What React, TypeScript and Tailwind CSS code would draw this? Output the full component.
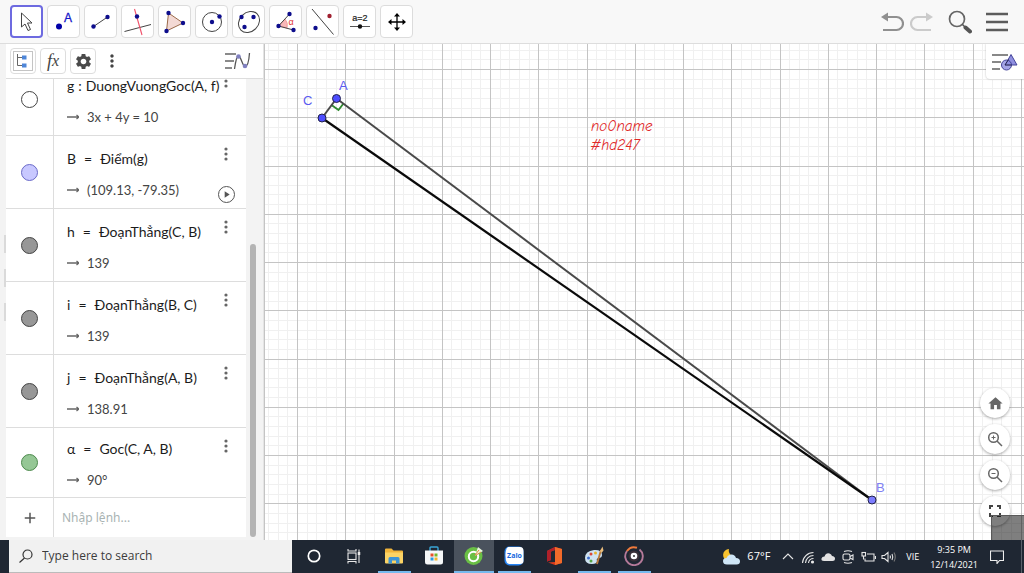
import type { ReactNode } from 'react';
import { MdHome, MdSettings, MdAdd, MdMoreVert, MdPlayArrow } from 'react-icons/md';

const NAVY = '#0d0d8c';

type Row = {
  name: string;
  sep: string;
  def: string;
  value: string;
  marble: string;
  play?: boolean;
  short?: boolean;
};

const ROWS: Row[] = [
  { name: 'g', sep: ':', def: 'DuongVuongGoc(A, f)', value: '3x + 4y = 10', marble: 'bg-white border-[#444444]' },
  { name: 'B', sep: '=', def: 'Điểm(g)', value: '(109.13, -79.35)', marble: 'bg-[#c8c8ff] border-[#6a6ac8]', play: true },
  { name: 'h', sep: '=', def: 'ĐoạnThẳng(C, B)', value: '139', marble: 'bg-[#979797] border-[#444444]' },
  { name: 'i', sep: '=', def: 'ĐoạnThẳng(B, C)', value: '139', marble: 'bg-[#979797] border-[#444444]' },
  { name: 'j', sep: '=', def: 'ĐoạnThẳng(A, B)', value: '138.91', marble: 'bg-[#979797] border-[#444444]' },
  { name: 'α', sep: '=', def: 'Goc(C, A, B)', value: '90°', marble: 'bg-[#95c795] border-[#4d8a4d]', short: true },
];

function Dot({ x, y, fill = NAVY, r = 2.2 }: { x: number; y: number; fill?: string; r?: number }) {
  return <circle cx={x} cy={y} r={r} fill={fill} />;
}

// every tool icon is drawn in a 32x32 box
const TOOLS: { label: string; icon: ReactNode }[] = [
  {
    label: 'Move',
    icon: <path d="M10.500 7V21L14 18L17 24.500L19.500 23.500L16.500 17H21Z" fill="#fff" stroke="#444" strokeWidth="1" />,
  },
  {
    label: 'Point',
    icon: (
      <>
        <Dot x={11} y={20.5} r={3} fill="#0000a8" />
        <text x="16" y="16" fontSize="12" fill="#1414c8" stroke="#1414c8" strokeWidth="0.3" fontFamily="Liberation Sans, sans-serif">A</text>
      </>
    ),
  },
  {
    label: 'Line',
    icon: (
      <>
        <path d="M8.500 20.500L22.500 11" stroke="#444" />
        <Dot x={8.5} y={20.5} />
        <Dot x={22.5} y={11} />
      </>
    ),
  },
  {
    label: 'Perpendicular line',
    icon: (
      <>
        <path d="M2.500 25.500L29 18.500" stroke="#444" />
        <path d="M12.500 3L20 29" stroke="#f0506a" strokeWidth="1.100" />
        <Dot x={15} y={10.5} />
      </>
    ),
  },
  {
    label: 'Polygon',
    icon: (
      <>
        <path d="M9.500 7L24 17L7.500 25Z" fill="#f3d9d4" stroke="#9a6a4a" />
        <Dot x={9.5} y={7} />
        <Dot x={24} y={17} />
        <Dot x={7.5} y={25} />
      </>
    ),
  },
  {
    label: 'Circle',
    icon: (
      <>
        <circle cx="16" cy="16" r="9.500" fill="none" stroke="#444" />
        <Dot x={16} y={16} />
        <Dot x={23.5} y={10.5} />
      </>
    ),
  },
  {
    label: 'Conic',
    icon: (
      <>
        <ellipse cx="16" cy="16" rx="11.500" ry="9.500" transform="rotate(-45 16 16)" fill="none" stroke="#444" />
        <Dot x={8.5} y={11} />
        <Dot x={20.500} y={11} />
        <Dot x={11.500} y={21} />
      </>
    ),
  },
  {
    label: 'Angle',
    icon: (
      <>
        <path d="M8.500 20L15 13A9.500 9.500 0 0 1 17 22Z" fill="#f8b8b8" stroke="#ee8888" strokeWidth="0.700" />
        <path d="M19.500 8L8.500 20L23.500 24" fill="none" stroke="#444" />
        <Dot x={19.500} y={8} />
        <Dot x={8.500} y={20} />
        <Dot x={23.500} y={24} />
        <text x="18.500" y="19" fontSize="9" fill="#e03030" fontFamily="Liberation Sans, sans-serif">α</text>
      </>
    ),
  },
  {
    label: 'Reflect',
    icon: (
      <>
        <path d="M5 3L26.500 28.500" stroke="#444" />
        <Dot x={8.500} y={22} />
        <Dot x={22.500} y={10} fill="#a02030" />
      </>
    ),
  },
  {
    label: 'Slider',
    icon: (
      <>
        <text x="16" y="15" textAnchor="middle" fontSize="9" fill="#222" stroke="#222" strokeWidth="0.200" fontFamily="Liberation Sans, sans-serif">a=2</text>
        <path d="M6 20.500H26" stroke="#555" />
        <Dot x={16} y={20.500} fill="#111" />
      </>
    ),
  },
  {
    label: 'Move view',
    icon: (
      <>
        <path d="M16 9V23M9 16H23" stroke="#000" strokeWidth="1.300" />
        <path d="M16 7L19 10.500H13ZM16 25L19 21.500H13ZM7 16L10.500 13V19ZM25 16L21.500 13V19Z" fill="#000" />
      </>
    ),
  },
];

function Toolbar() {
  return (
    <header className="flex h-[44px] shrink-0 items-center justify-between border-b border-[#dddddd] bg-[#f8f8f8] pr-4 pl-[10px]">
      <div className="flex gap-1">
        {TOOLS.map((t, i) => (
          <button
            key={t.label}
            aria-label={t.label}
            className={`flex h-[33px] w-[33px] items-center justify-center rounded-sm bg-white ${
              i === 0 ? 'border-2 border-[#6d6ae0]' : 'border border-[#dcdcdc]'
            }`}
          >
            <svg viewBox="0 0 32 32" className="h-8 w-8 shrink-0">{t.icon}</svg>
          </button>
        ))}
      </div>
      <div className="flex items-center">
        <button aria-label="Undo" className="mr-[6px]">
          <svg viewBox="0 0 24 24" className="h-6 w-6" fill="none">
            <path d="M6 7H16.500A6.500 6.500 0 0 1 16.500 20H3" stroke="#909090" strokeWidth="2.200" />
            <path d="M1 7L8 2.500V11.500Z" fill="#909090" />
          </svg>
        </button>
        <button aria-label="Redo" className="mr-[14px]">
          <svg viewBox="0 0 24 24" className="h-6 w-6" fill="none">
            <path d="M18 7H7.500A6.500 6.500 0 0 0 7.500 20H21" stroke="#cbcbcb" strokeWidth="2.200" />
            <path d="M23 7L16 2.500V11.500Z" fill="#cbcbcb" />
          </svg>
        </button>
        <button aria-label="Search" className="mr-[14px]">
          <svg viewBox="0 0 24 24" className="h-6 w-6" fill="none">
            <circle cx="9" cy="9" r="7.500" stroke="#666" strokeWidth="1.700" />
            <path d="M14.500 14.500L17 17" stroke="#555" strokeWidth="1.500" />
            <path d="M17.500 17.500L22 21.500" stroke="#555" strokeWidth="4" strokeLinecap="round" />
          </svg>
        </button>
        <button aria-label="Menu">
          <svg viewBox="0 0 22 22" className="h-[22px] w-[22px]">
            <path d="M0 3H22M0 11H22M0 19H22" stroke="#5c5c5c" strokeWidth="2.500" />
          </svg>
        </button>
      </div>
    </header>
  );
}

function AlgebraRow({ row }: { row: Row }) {
  return (
    <li className={`flex shrink-0 border-b border-[#dddddd] ${row.short ? 'h-[70px]' : 'h-[73px]'}`}>
      <div className="flex w-12 shrink-0 items-center justify-center border-r border-[#dddddd]">
        <button aria-label={`Show ${row.name}`} className={`h-[17px] w-[17px] rounded-full border ${row.marble}`} />
      </div>
      <div className={`flex min-w-0 flex-1 flex-col gap-[11px] pl-[13px] whitespace-nowrap ${row.short ? 'pt-[11px]' : 'pt-[13px]'}`}>
        <div className={`flex text-[14px] leading-5 text-[#1c1c1c] ${row.sep === ':' ? 'gap-1' : 'gap-2'}`}>
          <span>{row.name}</span>
          <span>{row.sep}</span>
          <span>{row.def}</span>
        </div>
        <div className="flex items-center gap-2 text-[13px] leading-5 text-[#444444]">
          <svg viewBox="0 0 12 8" className="h-2 w-3" fill="none">
            <path d="M0 4H12M9.500 2L12 4L9.500 6" stroke="#666" strokeWidth="1.300" />
          </svg>
          <span>{row.value}</span>
        </div>
      </div>
      <div className="flex w-10 shrink-0 flex-col items-center justify-between pt-[10px] pb-[5px]">
        <button aria-label="More">
          <svg viewBox="0 0 4 16" className="h-4 w-1" fill="#666">
            <circle cx="2" cy="3" r="1.600" />
            <circle cx="2" cy="8" r="1.600" />
            <circle cx="2" cy="13" r="1.600" />
          </svg>
        </button>
        {row.play && (
          <button aria-label="Play" className="flex h-[17px] w-[17px] items-center justify-center rounded-full border border-[#555555] text-[#555555]">
            <MdPlayArrow size={11} />
          </button>
        )}
      </div>
    </li>
  );
}

function AlgebraView() {
  return (
    <aside className="flex w-[258px] shrink-0 flex-col border-r border-[#e4e4e4] bg-[#f3f3f3]">
      <div className="flex h-[35px] shrink-0 items-center gap-[4px] border-b border-[#dddddd] bg-white pr-3 pl-[4px]">
        <button aria-label="Algebra view" className="flex h-[26px] w-[26px] items-center justify-center rounded-sm border border-[#dddddd] bg-white">
          <svg viewBox="0 0 20 20" className="h-5 w-5" fill="none">
            <rect x="0.500" y="0.500" width="19" height="19" stroke="#c4c4c4" />
            <path d="M4.500 3V14.500M4.500 6.500H9M4.500 14.500H9" stroke="#666" />
            <rect x="9" y="4.500" width="4.500" height="4" fill="#4f86d8" />
            <rect x="9" y="12.500" width="4.500" height="4" fill="#4f86d8" />
          </svg>
        </button>
        <button aria-label="Function" className="flex h-[26px] w-[26px] items-center justify-center rounded-sm border border-[#dddddd] bg-white font-['Liberation_Serif',serif] text-[18px] leading-5 text-[#444444] italic">
          <span>f</span>
          <span className="text-[16px]">x</span>
        </button>
        <button aria-label="Settings" className="flex h-[26px] w-[26px] items-center justify-center rounded-sm border border-[#dddddd] bg-white text-[#4a4a4a]">
          <MdSettings size={19} />
        </button>
        <button aria-label="More options" className="flex w-6 justify-center text-[#444444]">
          <MdMoreVert size={20} />
        </button>
        <button aria-label="Style bar" className="ml-auto">
          <svg viewBox="0 0 26 18" className="h-[18px] w-[26px]" fill="none">
            <path d="M0 2H11M0 9H9M0 16H7" stroke="#8a8a8a" strokeWidth="2" />
            <path d="M9.500 17C10.500 10 12 4 13.500 4C16 4 17.500 14.500 20 14.500C22.500 14.500 24 8 24.500 1" stroke="#555" strokeWidth="1.300" />
            <circle cx="13.500" cy="4.500" r="2.300" fill="#8080c0" />
            <circle cx="20" cy="14" r="2.300" fill="#8080c0" />
          </svg>
        </button>
      </div>
      <div className="flex min-h-0 flex-1 pb-[3px]">
        <div className="flex min-w-0 flex-1 flex-col justify-end overflow-hidden bg-white font-[Lato,'Noto_Sans',sans-serif]">
          <ul className="flex flex-col">
            {ROWS.map((row) => (
              <AlgebraRow key={row.name} row={row} />
            ))}
          </ul>
          <div className="flex h-[39px] shrink-0">
            <button aria-label="Add" className="flex w-12 shrink-0 items-center justify-center border-r border-[#dddddd] text-[#555555]">
              <MdAdd size={18} />
            </button>
            <input
              aria-label="Nhập lệnh"
              placeholder="Nhập lệnh..."
              className="min-w-0 flex-1 pl-2 font-['Noto_Sans',sans-serif] text-[12px] outline-none placeholder:text-[#a9b3b3]"
            />
          </div>
        </div>
        <div className="flex w-[17px] shrink-0 flex-col justify-end pl-1">
          <div className="h-[64%] w-[6px] rounded-full bg-[#b4b4b4]" />
        </div>
      </div>
    </aside>
  );
}

const UNIT = 48.25;
const LINES = Array.from({ length: 220 }, (_, i) => i - 5);

function Graph() {
  return (
    <svg className="absolute inset-0 h-full w-full" fontFamily="Liberation Sans, sans-serif" fontSize="13">
      <g shapeRendering="crispEdges">
        {LINES.filter((i) => i % 5 !== 0).map((i) => (
          <path
            key={i}
            d={`M${Math.round(32 + (i * UNIT) / 5) + 0.5} 0V2000M0 ${Math.round(25 + (i * UNIT) / 5) + 0.5}H3000`}
            stroke="#f0f0f0"
          />
        ))}
        {LINES.filter((i) => i % 5 === 0).map((i) => (
          <path
            key={i}
            d={`M${Math.round(32 + (i * UNIT) / 5) + 0.5} 0V2000M0 ${Math.round(25 + (i * UNIT) / 5) + 0.5}H3000`}
            stroke="#c4c4c4"
          />
        ))}
      </g>
      <path d="M78.500 59.500L73.500 66L66.500 61" fill="none" stroke="#2f8a2f" strokeWidth="1.900" />
      <path d="M71.500 54.500L607 456" stroke="#4a4a4a" strokeWidth="2" />
      <path d="M71.500 54.500L57 74" stroke="#4a4a4a" strokeWidth="2" />
      <path d="M57 74L607 456" stroke="#0a0a0a" strokeWidth="2.200" />
      <g stroke="#22224a">
        <circle cx="71.500" cy="54.500" r="4" fill="#4d4dff" />
        <circle cx="57" cy="74" r="4" fill="#4d4dff" />
        <circle cx="607" cy="456" r="4" fill="#7d7dff" />
      </g>
      <text x="74" y="46" fill="#5a5af0">A</text>
      <text x="38" y="61" fill="#5a5af0">C</text>
      <text x="611" y="448" fill="#8080f4">B</text>
      <g fill="#e02828" fontFamily="Z003, 'Comic Neue', cursive" fontStyle="italic" fontSize="15">
        <text x="326" y="87">no0name</text>
        <text x="325" y="106">#hd247</text>
      </g>
    </svg>
  );
}

function ZoomButton({ label, children }: { label: string; children: ReactNode }) {
  return (
    <button
      aria-label={label}
      className="flex h-[30px] w-[30px] items-center justify-center rounded-full bg-white text-[#666666] shadow-[0_1px_3px_rgba(0,0,0,0.35)]"
    >
      {children}
    </button>
  );
}

function GraphicsView() {
  return (
    <main className="relative min-w-0 flex-1 overflow-hidden border-l border-[#c4c4c4] bg-white">
      <Graph />
      <button
        aria-label="Graphics style bar"
        className="absolute top-0 right-0 flex h-[35px] w-[38px] items-center justify-center rounded-bl-sm bg-white shadow-[0_0_2px_rgba(0,0,0,0.3)]"
      >
        <svg viewBox="0 0 26 18" className="h-[18px] w-[26px]" fill="none">
          <path d="M0 2H16M0 9H9M0 16H8" stroke="#888" strokeWidth="2" />
          <path d="M19 1.500L25 12H13Z" fill="#8f8fe0" stroke="#44449a" />
          <circle cx="14.500" cy="12" r="5" fill="#8f8fe0" fillOpacity="0.800" stroke="#44449a" />
          <path d="M16.500 6.500L13 12H19.500" stroke="#22224a" />
        </svg>
      </button>
      <div className="absolute right-[14px] bottom-[14px] flex flex-col gap-[6px]">
        <ZoomButton label="Home">
          <MdHome size={17} />
        </ZoomButton>
        <ZoomButton label="Zoom in">
          <svg viewBox="0 0 16 16" className="h-4 w-4" fill="none" stroke="currentColor" strokeWidth="1.500">
            <circle cx="6.500" cy="6.500" r="4.800" />
            <path d="M10 10L15 15" />
            <path d="M6.500 4.500V8.500M4.500 6.500H8.500" strokeWidth="1" />
          </svg>
        </ZoomButton>
        <ZoomButton label="Zoom out">
          <svg viewBox="0 0 16 16" className="h-4 w-4" fill="none" stroke="currentColor" strokeWidth="1.500">
            <circle cx="6.500" cy="6.500" r="4.800" />
            <path d="M10 10L15 15" />
            <path d="M4.500 6.500H8.500" strokeWidth="1" />
          </svg>
        </ZoomButton>
        <ZoomButton label="Fullscreen">
          <svg viewBox="0 0 12 12" className="h-3 w-3" fill="none" stroke="#444" strokeWidth="2">
            <path d="M1 4V1H4M8 1H11V4M11 8V11H8M4 11H1V8" />
          </svg>
        </ZoomButton>
      </div>
      <div className="absolute right-0 bottom-0 h-[25px] w-[33px] border-t border-l border-[#5a5a5a] bg-black/50" />
    </main>
  );
}

const APPS: { label: string; width: string; bar: string; icon: ReactNode }[] = [
  { label: 'Cortana', width: 'w-10', bar: '', icon: <circle cx="10" cy="10" r="5.700" fill="none" stroke="#fff" strokeWidth="1.700" /> },
  {
    label: 'Task view',
    width: 'w-10',
    bar: '',
    icon: (
      <g fill="none" stroke="#e8e8e8" strokeWidth="1.100">
        <rect x="4" y="7" width="8" height="6.500" />
        <path d="M4 3V5H12V3M4 17.500V15.500H12V17.500M15 3.500V17" />
        <path d="M15 6V9" strokeWidth="2.500" />
      </g>
    ),
  },
  {
    label: 'File Explorer',
    width: 'w-10',
    bar: 'w-[33px]',
    icon: (
      <>
        <path d="M1 3.500Q1 2.500 2 2.500H7.500L9.500 4.500H18Q19 4.500 19 5.500V16.500H1Z" fill="#f0b43a" />
        <path d="M1 6.500H19V16.500Q19 17.500 18 17.500H2Q1 17.500 1 16.500Z" fill="#fbd365" />
        <path d="M4.500 17.500V12.500Q4.500 11 6 11H14Q15.500 11 15.500 12.500V17.500H12V14.500H8V17.500Z" fill="#3d94d6" />
      </>
    ),
  },
  {
    label: 'Store',
    width: 'w-10',
    bar: '',
    icon: (
      <>
        <path d="M6 5V2Q6 1 7 1H13Q14 1 14 2V5" fill="none" stroke="#3aa7d8" strokeWidth="1.400" />
        <path d="M1 4.500H19V16Q19 18.500 16.500 18.500H3.500Q1 18.500 1 16Z" fill="#f5f7f8" />
        <path d="M6.500 7.500H9.500V10.500H6.500Z" fill="#e8502a" />
        <path d="M10.500 7.500H13.500V10.500H10.500Z" fill="#75b82a" />
        <path d="M6.500 11.500H9.500V14.500H6.500Z" fill="#2a9be0" />
        <path d="M10.500 11.500H13.500V14.500H10.500Z" fill="#f4b62c" />
      </>
    ),
  },
  {
    label: 'Browser',
    width: 'w-10 bg-[#4a525d]',
    bar: 'w-full',
    icon: (
      <>
        <circle cx="9.500" cy="10" r="9" fill="#6abf45" />
        <circle cx="9.500" cy="10.500" r="4.700" fill="none" stroke="#fff" strokeWidth="2" />
        <path d="M11 10L14 1L19 5Z" fill="#e9f7dc" />
        <path d="M11 9L15 4M11.500 9.500L17 6" stroke="#e07a30" strokeWidth="0.900" />
      </>
    ),
  },
  {
    label: 'Zalo',
    width: 'w-10',
    bar: 'w-[33px]',
    icon: (
      <>
        <rect x="0.500" y="0.500" width="19" height="19" rx="5" fill="#2684f5" />
        <path d="M4 1H16Q19.500 1 19.500 5V15Q19.500 18 16 18H5L3 17Q1.500 14 1.500 9Q1.500 3 4 1Z" fill="#fff" />
        <text x="10.500" y="12" textAnchor="middle" fontSize="7" fontWeight="700" fill="#1468e0" fontFamily="Open Sans, sans-serif">Zalo</text>
      </>
    ),
  },
  {
    label: 'Office',
    width: 'w-10',
    bar: '',
    icon: (
      <>
        <path d="M3 5L11 1L18 3V17L11 19L4 16.500L11 16V4L7 5.500V14L3 15.500Z" fill="#dc3a1c" />
        <path d="M11 1L18 3V17L11 19Z" fill="#f26a2a" />
        <path d="M3 5L11 1V4L7 5.500V14L3 15.500Z" fill="#b0202a" />
      </>
    ),
  },
  {
    label: 'Paint',
    width: 'w-10',
    bar: 'w-[33px]',
    icon: (
      <>
        <path d="M1 12Q1 5 10 4Q18 3.500 18 9Q18 12 14.500 12Q12 12.500 13 15Q13 18 8 18Q1 18 1 12Z" fill="#cfe3f2" />
        <Dot x={4.500} y={12} r={1.500} fill="#3f6fd0" />
        <Dot x={7} y={8} r={1.500} fill="#d8483a" />
        <Dot x={11.500} y={7} r={1.500} fill="#e8b52c" />
        <Dot x={7} y={15} r={1.500} fill="#56a544" />
        <path d="M17 4L13 18" stroke="#b8793a" strokeWidth="1.800" />
        <path d="M16 5L18.500 0.500L19.500 4.500L17.500 7Z" fill="#e9bd7c" />
      </>
    ),
  },
  {
    label: 'Groove Music',
    width: 'w-10',
    bar: 'w-[33px]',
    icon: (
      <>
        <path d="M15.500 3.500A8.800 8.800 0 1 1 3 5" fill="none" stroke="#b57a9a" strokeWidth="1.900" />
        <path d="M3 5A8.800 8.800 0 0 1 13 1.800" fill="none" stroke="#f07a3c" strokeWidth="2" />
        <circle cx="10" cy="10" r="5.500" fill="#3a3038" />
        <circle cx="10" cy="10" r="3.300" fill="#fff" />
        <circle cx="10" cy="10" r="1" fill="#333" />
      </>
    ),
  },
];

const TRAY: { label: string; icon: ReactNode }[] = [
  { label: 'Show hidden icons', icon: <path d="M3 10L8 5L13 10" /> },
  {
    label: 'Network',
    icon: (
      <>
        <path d="M2.500 14A11 11 0 0 1 13.500 3.500M5.500 14A8 8 0 0 1 13.500 6.500M8.500 14A5 5 0 0 1 13.500 9.500" />
        <circle cx="12.500" cy="13" r="1" fill="#fff" />
      </>
    ),
  },
  { label: 'OneDrive', icon: <path d="M4 12Q1 12 1.500 9.500Q2 7.500 4.500 7.500Q6 3.500 9.500 4.500Q11.500 5 12 7Q15 7.500 15 9.500Q15 12 12.500 12Z" fill="#e2e2e2" stroke="none" /> },
  {
    label: 'Meet now',
    icon: (
      <>
        <rect x="3" y="5" width="7" height="6" rx="1.500" />
        <path d="M10 7.500L13 6V10.500L10 9M4 2.500Q8 1 12 2.500M4 13.500Q8 15 12 13.500" />
      </>
    ),
  },
  {
    label: 'Battery',
    icon: (
      <>
        <path d="M7 5H14V12H5V9.500M15.500 7V10" />
        <rect x="2" y="3.500" width="3.500" height="3.500" />
        <path d="M3.500 7V10.500" />
      </>
    ),
  },
  {
    label: 'Volume',
    icon: (
      <>
        <path d="M2 6.500H4.500L8 3.500V12.500L4.500 9.500H2Z" />
        <path d="M10 6.500Q11 8 10 9.500M12 5Q13.500 8 12 11" />
        <path d="M14 3.500Q16.500 8 14 12.500" stroke="#777" />
      </>
    ),
  },
];

function Taskbar() {
  return (
    <footer className="flex h-[33px] shrink-0 bg-[#1f2733] pl-[9px] font-['Open_Sans',sans-serif] text-white">
      <label className="flex w-[283px] shrink-0 items-center gap-[9px] border-b border-[#bbbbbb] bg-[#f1f1f1] pl-[10px]">
        <svg viewBox="0 0 14 14" className="h-[14px] w-[14px]" fill="none" stroke="#333" strokeWidth="1.200">
          <circle cx="8.500" cy="5.500" r="4.500" />
          <path d="M5.500 9L0.500 13.500" />
        </svg>
        <input
          aria-label="Search"
          placeholder="Type here to search"
          className="min-w-0 flex-1 text-[12px] outline-none placeholder:text-[#3c3c3c]"
        />
      </label>
      <nav className="flex pl-[2px]">
        {APPS.map((app) => (
          <button key={app.label} aria-label={app.label} className={`flex flex-col items-center ${app.width}`}>
            <span className="flex flex-1 items-center">
              <svg viewBox="0 0 20 20" className="h-5 w-5">{app.icon}</svg>
            </span>
            <span className={`h-[2px] bg-[#76b9ed] ${app.bar}`} />
          </button>
        ))}
      </nav>
      <div className="mr-[2px] ml-auto flex items-center border-r border-[#59606a] pr-[17px]">
        <button className="mr-[10px] flex items-center gap-[6px] text-[11px]">
          <svg viewBox="0 0 20 18" className="h-[18px] w-5">
            <path d="M8 1A6 6 0 1 0 14 8A5.500 5.500 0 0 1 8 1Z" fill="#f8c22e" />
            <path d="M6 16.500Q2 16.500 2 13Q2 10 5.500 10Q7 6.500 10.500 6.500Q14 6.500 15 10Q19 10 19 13.500Q19 16.500 15.500 16.500Z" fill="#cfe6f7" />
          </svg>
          67°F
        </button>
        <div className="flex gap-1">
          {TRAY.map((item) => (
            <button key={item.label} aria-label={item.label}>
              <svg viewBox="0 0 16 16" className="h-4 w-4" fill="none" stroke="#e6e6e6" strokeWidth="1.100">
                {item.icon}
              </svg>
            </button>
          ))}
        </div>
        <button className="ml-[10px] text-[9px]">VIE</button>
        <button className="ml-[11px] flex flex-col items-center text-[9px] leading-[15px]">
          <span>9:35 PM</span>
          <span>12/14/2021</span>
        </button>
        <button aria-label="Notifications" className="ml-3">
          <svg viewBox="0 0 14 14" className="h-[14px] w-[14px]" fill="none" stroke="#eee" strokeWidth="1.100">
            <path d="M0.500 1H13.500V10.500H9.500L7 13.500V10.500H0.500Z" />
          </svg>
        </button>
      </div>
    </footer>
  );
}

export default function App() {
  return (
    <div className="flex h-screen flex-col overflow-hidden bg-white font-['Liberation_Sans',Arial,sans-serif]">
      <Toolbar />
      <div className="flex min-h-0 flex-1">
        <div className="flex w-[6px] shrink-0 flex-col items-end justify-center gap-4 bg-[#f3f3f3] pb-7">
          <div className="h-[18px] w-[2px] bg-[#dadada]" />
          <div className="h-[18px] w-[2px] bg-[#dadada]" />
          <div className="h-[18px] w-[2px] bg-[#dadada]" />
        </div>
        <AlgebraView />
        <GraphicsView />
      </div>
      <Taskbar />
    </div>
  );
}
